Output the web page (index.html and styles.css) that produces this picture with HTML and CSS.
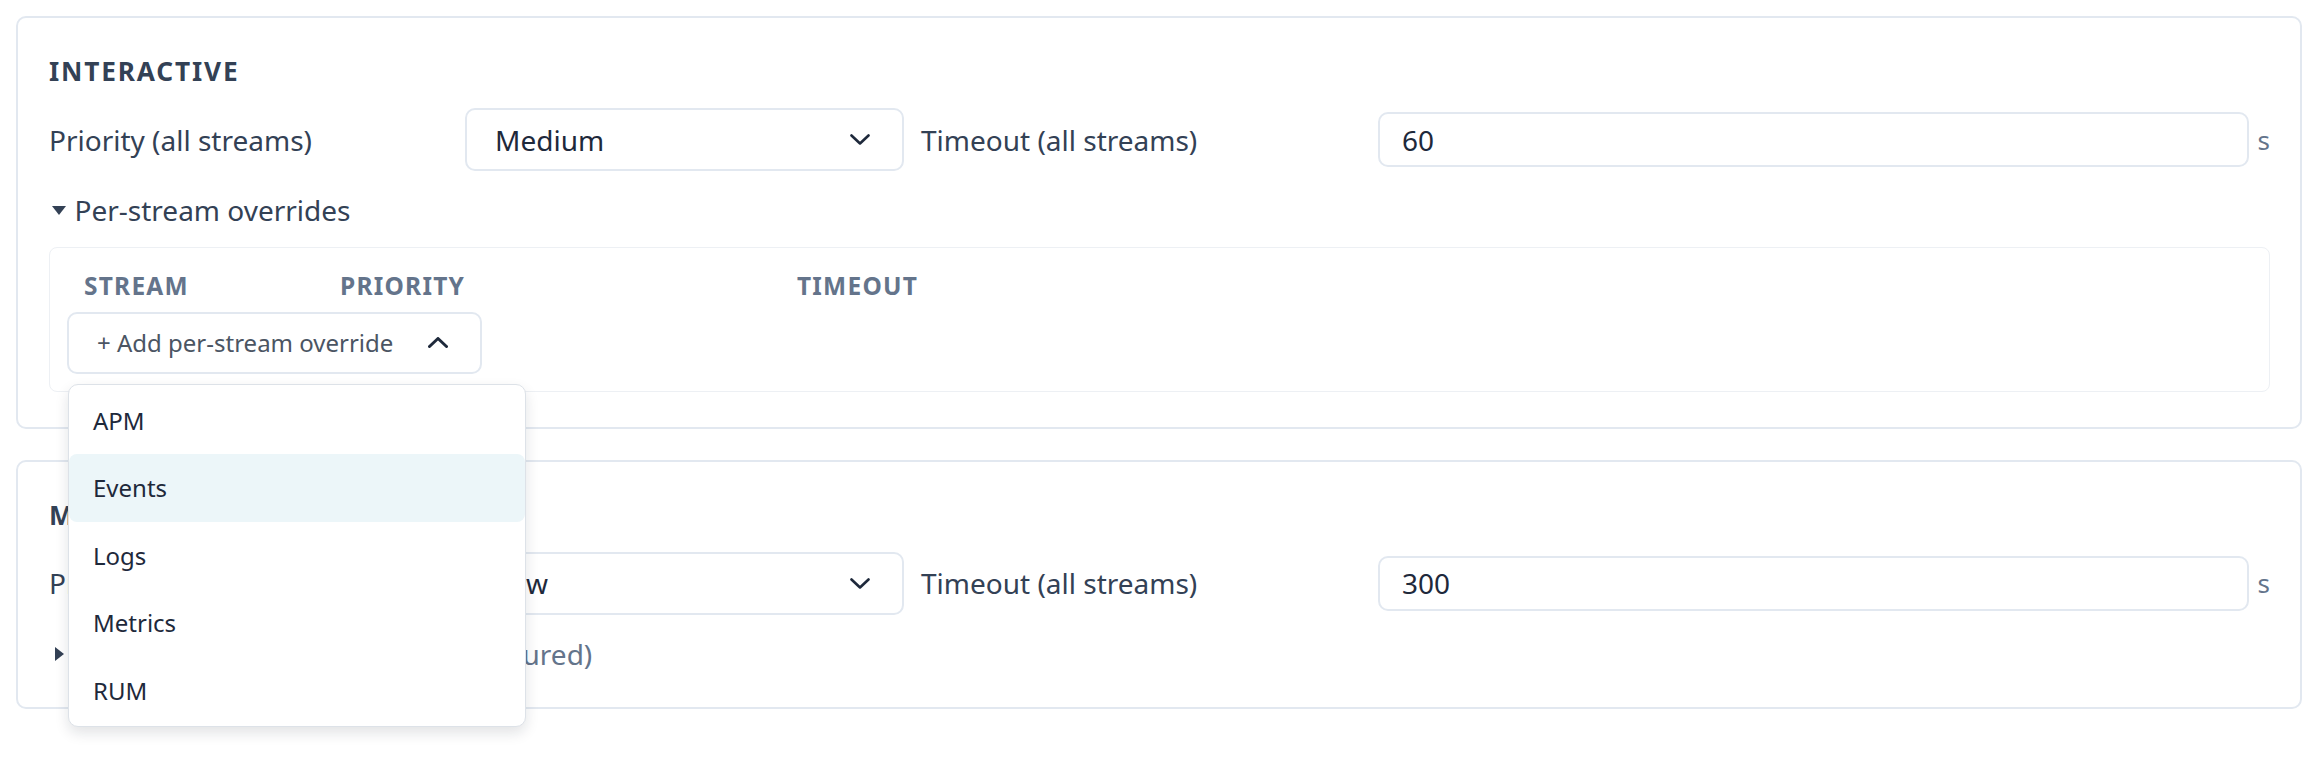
FILE: index.html
```html
<!DOCTYPE html>
<html lang="en">
<head>
<meta charset="utf-8">
<title>Stream priorities</title>
<link rel="stylesheet" href="styles.css">
</head>
<body>
<main class="page">
  <section class="card">
    <h3 class="card-title">INTERACTIVE</h3>
    <div class="field-row">
      <span class="field-label first">Priority (all streams)</span>
      <div class="select">
        <span>Medium</span>
        <svg class="chev" width="20" height="11" viewBox="0 0 20 11"><polyline points="1.5,1.5 10,9.5 18.5,1.5"/></svg>
      </div>
      <span class="field-label timeout">Timeout (all streams)</span>
      <div class="text-input">60</div>
      <span class="unit">s</span>
    </div>
    <div class="toggle">
      <span class="marker"><span class="tri-down"></span></span>
      <span>Per-stream overrides</span>
    </div>
    <div class="overrides">
      <div class="ov-head">
        <span>STREAM</span>
        <span>PRIORITY</span>
        <span>TIMEOUT</span>
      </div>
      <div class="add-wrap">
        <div class="add-btn">
          <span>+ Add per-stream override</span>
          <svg class="chev up" width="20" height="11" viewBox="0 0 20 11"><polyline points="1.5,9.5 10,1.5 18.5,9.5"/></svg>
        </div>
        <ul class="menu">
          <li class="menu-item">APM</li>
          <li class="menu-item active">Events</li>
          <li class="menu-item">Logs</li>
          <li class="menu-item">Metrics</li>
          <li class="menu-item">RUM</li>
        </ul>
      </div>
    </div>
  </section>

  <section class="card second">
    <h3 class="card-title">MAINTENANCE</h3>
    <div class="field-row">
      <span class="field-label first">Priority (all streams)</span>
      <div class="select">
        <span>Low</span>
        <svg class="chev" width="20" height="11" viewBox="0 0 20 11"><polyline points="1.5,1.5 10,9.5 18.5,1.5"/></svg>
      </div>
      <span class="field-label timeout">Timeout (all streams)</span>
      <div class="text-input">300</div>
      <span class="unit">s</span>
    </div>
    <div class="toggle">
      <span class="marker"><span class="tri-right"></span></span>
      <span>Per-stream overrides <span class="muted">(none configured)</span></span>
    </div>
  </section>
</main>
</body>
</html>
```

FILE: styles.css
```css
* {
  box-sizing: border-box;
}

html, body {
  margin: 0;
  background: #ffffff;
}

body {
  font-family: "Noto Sans", "Open Sans", sans-serif;
  color: #334155;
  padding: 16px 10px 0 16px;
  min-height: 768px;
}

.page {
  display: flex;
  flex-direction: column;
  gap: 31px;
}

.card {
  border: 2px solid #e2e8f0;
  border-radius: 10px;
  padding: 34px 30px 35px 31px;
  background: #ffffff;
}

.card-title {
  margin: 0;
  font-size: 26.25px;
  line-height: 39px;
  font-weight: 700;
  letter-spacing: 0.07em;
  color: #334155;
}

.field-row {
  display: flex;
  align-items: center;
  margin-top: 17px;
  height: 63px;
}

.field-label {
  font-size: 28px;
  line-height: 40px;
  color: #334155;
  flex: none;
}

.field-label.first {
  width: 416px;
}

.field-label.timeout {
  width: 457px;
  margin-left: 17px;
}

.select {
  flex: none;
  width: 439px;
  height: 63px;
  border: 2px solid #e2e8f0;
  border-radius: 10px;
  padding: 0 32px 0 28px;
  display: flex;
  align-items: center;
  justify-content: space-between;
  font-size: 28px;
  color: #1e293b;
}

.chev {
  display: block;
  fill: none;
  stroke: #1e293b;
  stroke-width: 2.6;
  stroke-linecap: round;
  stroke-linejoin: round;
}

.chev.up {
  stroke-width: 3;
}

.text-input {
  flex: 1;
  height: 55px;
  border: 2px solid #e2e8f0;
  border-radius: 10px;
  padding: 0 22px;
  display: flex;
  align-items: center;
  font-size: 28px;
  color: #1e293b;
}

.unit {
  margin-left: 9px;
  font-size: 26px;
  color: #64748b;
}

.toggle {
  display: flex;
  align-items: center;
  margin-top: 21px;
  font-size: 28px;
  line-height: 36px;
  color: #334155;
}

.marker {
  width: 25.5px;
  flex: none;
  display: flex;
  align-items: center;
}

.tri-down {
  margin-left: 3px;
  width: 0;
  height: 0;
  border-left: 7px solid transparent;
  border-right: 7px solid transparent;
  border-top: 9px solid #334155;
}

.tri-right {
  margin-left: 6px;
  width: 0;
  height: 0;
  border-top: 7.5px solid transparent;
  border-bottom: 7.5px solid transparent;
  border-left: 9px solid #334155;
}

.muted {
  color: #64748b;
}

.overrides {
  margin-top: 18.5px;
  border: 1px solid #edf0f4;
  border-radius: 8px;
  padding: 17px;
}

.ov-head {
  display: grid;
  grid-template-columns: 256px 457px 1fr;
  margin-top: 3px;
  font-size: 24.5px;
  line-height: 36px;
  font-weight: 700;
  letter-spacing: 0.05em;
  color: #64748b;
}

.ov-head span {
  padding-left: 17px;
}

.add-wrap {
  position: relative;
  margin-top: 8px;
  width: 415px;
}

.add-btn {
  height: 62px;
  border: 2px solid #e2e8f0;
  border-radius: 10px;
  padding: 0 32px 0 28px;
  display: flex;
  align-items: center;
  justify-content: space-between;
  font-size: 24px;
  color: #4b5563;
}

.menu {
  position: absolute;
  top: 72px;
  left: 1px;
  width: 458px;
  margin: 0;
  padding: 2px 0 2px;
  list-style: none;
  background: #ffffff;
  border: 1px solid #dde2e8;
  border-radius: 10px;
  box-shadow: 0 6px 14px rgba(15, 23, 42, 0.12);
  z-index: 10;
}

.menu-item {
  height: 67.6px;
  line-height: 67.6px;
  padding-left: 24px;
  font-size: 24px;
  color: #1e293b;
  border-radius: 8px;
}

.menu-item.active {
  background: #ecf6f9;
}
```
